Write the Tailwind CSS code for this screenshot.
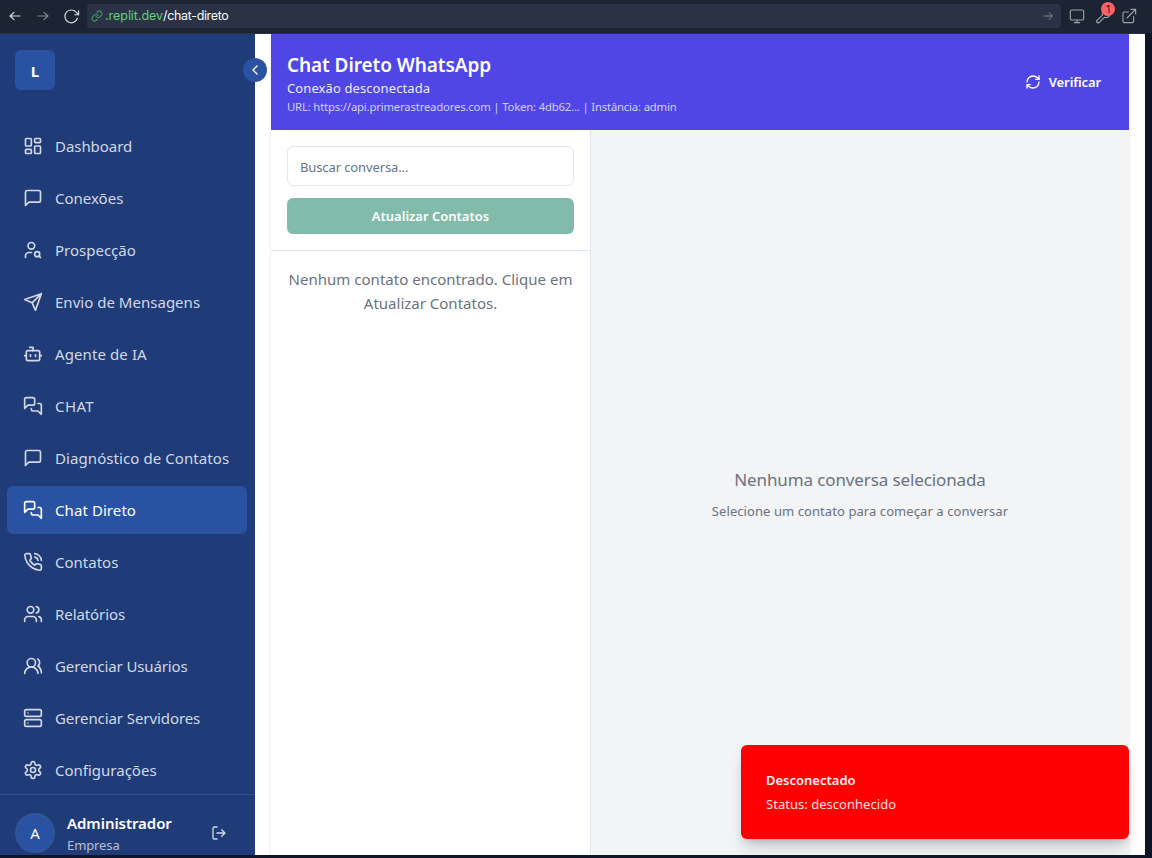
<!DOCTYPE html>
<html lang="pt-BR">
<head>
<meta charset="utf-8">
<title>Chat Direto</title>
<script src="https://cdn.jsdelivr.net/npm/@tailwindcss/browser@4"></script>
</head>
<body class="flex h-[858px] w-[1152px] flex-col overflow-hidden bg-[#0e1525] font-['Noto_Sans',sans-serif]">
<header class="flex h-[33px] shrink-0 items-center bg-[#1c2333] pb-px text-[#9da2a6]">
  <svg class="ml-[7px] size-4 text-[#d5d9e0]" viewBox="0 0 24 24" fill="none" stroke="currentColor" stroke-width="1.800" stroke-linecap="round" stroke-linejoin="round"><path d="M19.500 12H4.500M10.500 6.500l-6 5.500 6 5.500"/></svg>
  <svg class="ml-3 size-4 text-[#80858f]" viewBox="0 0 24 24" fill="none" stroke="currentColor" stroke-width="1.800" stroke-linecap="round" stroke-linejoin="round"><path d="M4.500 12h15M13.500 6.500l6 5.500-6 5.500"/></svg>
  <svg class="ml-3 size-[17px] text-[#d5d9e0]" viewBox="0 0 24 24" fill="none" stroke="currentColor" stroke-width="1.700" stroke-linecap="round" stroke-linejoin="round"><path d="M22 4v5.500h-5.500"/><path d="M20.300 14.500A9 9 0 1 1 18.400 5.800L22 9.500"/></svg>
  <div class="ml-[7px] flex h-6 w-[974px] items-center rounded bg-[#2b3245] pl-1 pr-[7px]">
    <svg class="size-3 text-[#3f9a62]" viewBox="0 0 24 24" fill="none" stroke="currentColor" stroke-width="2.200" stroke-linecap="round" stroke-linejoin="round"><path d="M10 13a5 5 0 0 0 7.540.540l3-3a5 5 0 0 0-7.070-7.070l-1.720 1.710"/><path d="M14 11a5 5 0 0 0-7.540-.540l-3 3a5 5 0 0 0 7.070 7.070l1.710-1.710"/></svg>
    <span class="ml-[2px] font-['Inter',sans-serif] text-[12.500px] tracking-[-0.040px] text-[#5ad279]">.replit.dev</span><span class="font-['Inter',sans-serif] text-[12.500px] tracking-[-0.350px] text-[#f5f9fc]">/chat-direto</span>
    <svg class="ml-auto size-3 text-[#80858f]" viewBox="0 0 24 24" fill="none" stroke="currentColor" stroke-width="2" stroke-linecap="round" stroke-linejoin="round"><path d="M4 12h16M14 5l7 7-7 7"/></svg>
  </div>
  <svg class="ml-2 size-4" viewBox="0 0 24 24" fill="none" stroke="currentColor" stroke-width="1.700" stroke-linecap="round" stroke-linejoin="round"><rect x="2" y="3" width="20" height="15" rx="2"/><path d="M8 22h8M12 18v4"/></svg>
  <div class="relative ml-[10px] size-4">
    <svg class="size-4" viewBox="0 0 24 24" fill="none" stroke="currentColor" stroke-width="1.700" stroke-linecap="round" stroke-linejoin="round"><path d="M16 5.500v3l2 2h3l1.500-2a6 6 0 0 1-8.300 5.500L6.500 21.500a2.120 2.120 0 0 1-3.500-3L11 11a6 6 0 0 1 6.500-7.500z"/></svg>
    <span class="absolute -top-[6px] left-[6px] flex size-[14px] items-center justify-center rounded-full bg-[#ff6166] font-['Inter',sans-serif] text-[11px] leading-none text-[#1c2333]">1</span>
  </div>
  <svg class="ml-[10px] size-4" viewBox="0 0 24 24" fill="none" stroke="currentColor" stroke-width="1.700" stroke-linecap="round" stroke-linejoin="round"><path d="M19 13v7a2 2 0 0 1-2 2H5a2 2 0 0 1-2-2V8a2 2 0 0 1 2-2h6M15 2h7v7M9 15 22 2"/></svg>
</header>
<div class="h-px w-[1145px] shrink-0 bg-[#2b3245]"></div>

<div class="relative flex h-[821px] w-[1145px] shrink-0 overflow-hidden bg-white">
  <aside class="relative flex w-[255px] shrink-0 flex-col bg-[#1f3c79] text-[15px] text-[#d2d8e4]">
    <div class="h-20 px-[15px] pt-4">
      <div class="flex size-10 items-center justify-center rounded-md bg-[#2952a3] pt-[2px] text-[15px] font-bold text-white">L</div>
    </div>
    <button class="absolute left-[243px] top-6 z-10 flex size-6 items-center justify-center rounded-full bg-[#2952a3] text-white">
      <svg class="size-4" viewBox="0 0 24 24" fill="none" stroke="currentColor" stroke-width="2" stroke-linecap="round" stroke-linejoin="round"><path d="m15 18-6-6 6-6"/></svg>
    </button>
    <nav class="flex flex-1 flex-col gap-1 pl-[7px] pr-2 pt-2 [&>a]:flex [&>a]:h-12 [&>a]:items-center [&>a]:gap-3 [&>a]:rounded-md [&>a]:pl-4 [&_svg]:size-5 [&_svg]:fill-none [&_svg]:stroke-current [&_svg]:stroke-2 [&_svg]:[stroke-linecap:round] [&_svg]:[stroke-linejoin:round]">
      <a><svg viewBox="0 0 24 24"><rect width="7" height="9" x="3" y="3" rx="1"/><rect width="7" height="5" x="14" y="3" rx="1"/><rect width="7" height="9" x="14" y="12" rx="1"/><rect width="7" height="5" x="3" y="16" rx="1"/></svg><span class="tracking-[-0.050px]">Dashboard</span></a>
      <a><svg viewBox="0 0 24 24"><path d="M21 15a2 2 0 0 1-2 2H7l-4 4V5a2 2 0 0 1 2-2h14a2 2 0 0 1 2 2z"/></svg><span>Conexões</span></a>
      <a><svg viewBox="0 0 24 24"><circle cx="10" cy="7" r="4"/><path d="M10.300 15H7a4 4 0 0 0-4 4v2"/><circle cx="17" cy="17" r="3"/><path d="m21 21-1.900-1.900"/></svg><span>Prospecção</span></a>
      <a><svg viewBox="0 0 24 24"><path d="m22 2-7 20-4-9-9-4ZM22 2 11 13"/></svg><span class="tracking-[0.020px]">Envio de Mensagens</span></a>
      <a><svg viewBox="0 0 24 24"><path d="M12 8V4H8"/><rect width="16" height="12" x="4" y="8" rx="2"/><path d="M2 14h2M20 14h2M15 13v2M9 13v2"/></svg><span class="tracking-[0.100px]">Agente de IA</span></a>
      <a><svg viewBox="0 0 24 24"><path d="M14 9a2 2 0 0 1-2 2H6l-4 4V4c0-1.100.900-2 2-2h8a2 2 0 0 1 2 2z"/><path d="M18 9h2a2 2 0 0 1 2 2v11l-4-4h-6a2 2 0 0 1-2-2v-1"/></svg><span class="tracking-[0.400px]">CHAT</span></a>
      <a><svg viewBox="0 0 24 24"><path d="M21 15a2 2 0 0 1-2 2H7l-4 4V5a2 2 0 0 1 2-2h14a2 2 0 0 1 2 2z"/></svg><span class="tracking-[0.080px]">Diagnóstico de Contatos</span></a>
      <a class="bg-[#2952a3] text-white"><svg viewBox="0 0 24 24"><path d="M14 9a2 2 0 0 1-2 2H6l-4 4V4c0-1.100.900-2 2-2h8a2 2 0 0 1 2 2z"/><path d="M18 9h2a2 2 0 0 1 2 2v11l-4-4h-6a2 2 0 0 1-2-2v-1"/></svg><span class="tracking-[0.080px]">Chat Direto</span></a>
      <a><svg viewBox="0 0 24 24"><path d="M22 16.920v3a2 2 0 0 1-2.180 2 19.790 19.790 0 0 1-8.630-3.070 19.500 19.500 0 0 1-6-6 19.790 19.790 0 0 1-3.070-8.670A2 2 0 0 1 4.110 2h3a2 2 0 0 1 2 1.720 12.840 12.840 0 0 0 .7 2.810 2 2 0 0 1-.45 2.110L8.090 9.910a16 16 0 0 0 6 6l1.270-1.270a2 2 0 0 1 2.110-.45 12.840 12.840 0 0 0 2.810.7A2 2 0 0 1 22 16.920z"/><path d="M14.050 2a9 9 0 0 1 8 7.940M14.050 6A5 5 0 0 1 18 10"/></svg><span>Contatos</span></a>
      <a><svg viewBox="0 0 24 24"><path d="M16 21v-2a4 4 0 0 0-4-4H6a4 4 0 0 0-4 4v2"/><circle cx="9" cy="7" r="4"/><path d="M22 21v-2a4 4 0 0 0-3-3.870M16 3.130a4 4 0 0 1 0 7.750"/></svg><span class="tracking-[-0.080px]">Relatórios</span></a>
      <a><svg viewBox="0 0 24 24"><path d="M18 21a8 8 0 0 0-16 0"/><circle cx="10" cy="8" r="5"/><path d="M22 20c0-3.370-2-6.500-4-8a5 5 0 0 0-.45-8.300"/></svg><span class="tracking-[-0.120px]">Gerenciar Usuários</span></a>
      <a><svg viewBox="0 0 24 24"><rect width="20" height="8" x="2" y="2" rx="2"/><rect width="20" height="8" x="2" y="14" rx="2"/><path d="M6 6h.01M6 18h.01"/></svg><span class="tracking-[-0.080px]">Gerenciar Servidores</span></a>
      <a><svg viewBox="0 0 24 24"><path d="M12.220 2h-.44a2 2 0 0 0-2 2v.18a2 2 0 0 1-1 1.730l-.43.25a2 2 0 0 1-2 0l-.15-.08a2 2 0 0 0-2.730.73l-.22.38a2 2 0 0 0 .73 2.730l.15.1a2 2 0 0 1 1 1.720v.51a2 2 0 0 1-1 1.740l-.15.09a2 2 0 0 0-.73 2.730l.22.38a2 2 0 0 0 2.730.73l.15-.08a2 2 0 0 1 2 0l.43.25a2 2 0 0 1 1 1.730V20a2 2 0 0 0 2 2h.44a2 2 0 0 0 2-2v-.18a2 2 0 0 1 1-1.730l.43-.25a2 2 0 0 1 2 0l.15.08a2 2 0 0 0 2.730-.73l.22-.39a2 2 0 0 0-.73-2.730l-.15-.08a2 2 0 0 1-1-1.740v-.5a2 2 0 0 1 1-1.740l.15-.09a2 2 0 0 0 .73-2.730l-.22-.38a2 2 0 0 0-2.730-.73l-.15.08a2 2 0 0 1-2 0l-.43-.25a2 2 0 0 1-1-1.730V4a2 2 0 0 0-2-2z"/><circle cx="12" cy="12" r="3"/></svg><span>Configurações</span></a>
    </nav>
    <div class="flex h-[61px] shrink-0 items-start border-t border-[#2f539c] pl-[15px] pt-[18px]">
      <div class="flex size-10 items-center justify-center rounded-full border-2 border-[#315597] bg-[#2952a3] text-white">A</div>
      <div class="-mt-[2px] ml-3 w-[144px]">
        <p class="text-[15px] font-semibold leading-6 text-white"><span class="tracking-[-0.060px]">Administrador</span></p>
        <p class="text-[13px] leading-5 text-[#b4bfd3]"><span class="tracking-[-0.100px]">Empresa</span></p>
      </div>
      <svg class="mt-3 size-4" viewBox="0 0 24 24" fill="none" stroke="currentColor" stroke-width="2" stroke-linecap="round" stroke-linejoin="round"><path d="M9 21H5a2 2 0 0 1-2-2V5a2 2 0 0 1 2-2h4M16 17l5-5-5-5M21 12H9"/></svg>
    </div>
  </aside>

  <main class="ml-4 flex w-[858px] flex-col shadow-sm">
    <div class="flex h-24 shrink-0 items-center justify-between bg-[#4f46e5] pl-4 pr-7 text-white">
      <div class="pt-[2px]">
        <h1 class="text-[19px] font-semibold leading-7"><span class="tracking-[-0.080px]">Chat Direto WhatsApp</span></h1>
        <p class="-mt-px text-[13px] leading-5 text-[#edecfc]"><span class="tracking-[0.100px]">Conexão desconectada</span></p>
        <p class="pt-px text-[11.300px] leading-4 text-[#d3d1f9]"><span class="tracking-[-0.170px]">URL: https://api.primerastreadores.com | Token: 4db62... | Instância: admin</span></p>
      </div>
      <button class="flex items-center gap-2 text-[13px] font-semibold">
        <svg class="size-4" viewBox="0 0 24 24" fill="none" stroke="currentColor" stroke-width="2" stroke-linecap="round" stroke-linejoin="round"><path d="M3 12a9 9 0 0 1 9-9 9.750 9.750 0 0 1 6.740 2.740L21 8"/><path d="M21 3v5h-5M21 12a9 9 0 0 1-9 9 9.750 9.750 0 0 1-6.740-2.740L3 16M8 16H3v5"/></svg>
        <span class="pt-[2px] tracking-[-0.100px]">Verificar</span>
      </button>
    </div>
    <div class="flex flex-1">
      <section class="w-[320px] shrink-0 border-r border-[#e2e8f0]">
        <div class="flex h-[121px] flex-col gap-3 border-b border-[#e2e8f0] p-4">
          <div class="flex h-10 shrink-0 items-center rounded-md border border-[#e2e8f0] px-3 pt-[3px] text-[13px] text-[#64748b]"><span class="tracking-[-0.120px]">Buscar conversa...</span></div>
          <button class="flex h-9 shrink-0 items-center justify-center rounded-md bg-[#82bbaa] pt-[2px] text-[13px] font-semibold text-white"><span>Atualizar Contatos</span></button>
        </div>
        <p class="pt-4 text-center text-[15px] leading-6 text-[#6b7280]"><span class="tracking-[0.020px]">Nenhum contato encontrado. Clique em</span><br><span>Atualizar Contatos.</span></p>
      </section>
      <section class="flex flex-1 flex-col items-center bg-[#f3f4f6] pt-[336px] text-[#6b7280]">
        <p class="text-[17px] leading-7"><span class="tracking-[-0.120px]">Nenhuma conversa selecionada</span></p>
        <p class="mt-[7px] text-[13px] leading-5"><span class="tracking-[0.075px]">Selecione um contato para começar a conversar</span></p>
      </section>
    </div>
  </main>

  <div class="absolute bottom-4 right-4 flex h-[94px] w-[388px] flex-col gap-1 rounded-md bg-[#ff0000] px-[25px] pt-[25px] text-[13px] leading-5 shadow-[0_10px_15px_-3px_rgb(0_0_0/0.2),0_4px_6px_-4px_rgb(0_0_0/0.2)]">
    <p class="font-semibold text-[#fff0f0]"><span>Desconectado</span></p>
    <p class="text-[#ffe0e0]"><span class="tracking-[0.030px]">Status: desconhecido</span></p>
  </div>
</div>
</body>
</html>
